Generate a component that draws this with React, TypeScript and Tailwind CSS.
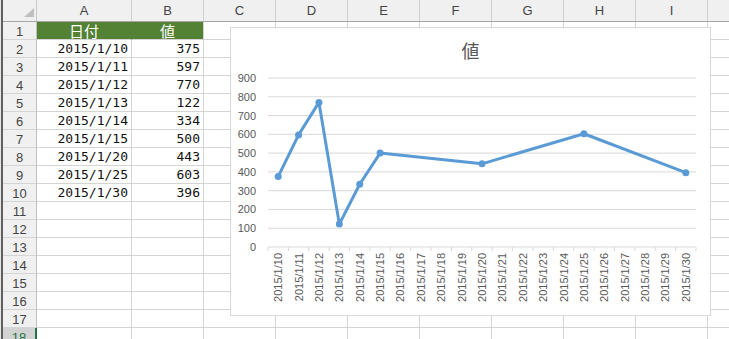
import React from 'react';

const cols = [
  { key: 'A', label: 'A', w: 'w-[95px]' },
  { key: 'B', label: 'B', w: 'w-[72px]' },
  { key: 'C', label: 'C', w: 'w-[72px]' },
  { key: 'D', label: 'D', w: 'w-[72px]' },
  { key: 'E', label: 'E', w: 'w-[72px]' },
  { key: 'F', label: 'F', w: 'w-[72px]' },
  { key: 'G', label: 'G', w: 'w-[72px]' },
  { key: 'H', label: 'H', w: 'w-[72px]' },
  { key: 'I', label: 'I', w: 'w-[72px]' },
  // J is scrolled mostly out of view; its letter isn't visible
  { key: 'J', label: '', w: 'w-[72px]' },
];

const data = [
  { date: '2015/1/10', day: 10, value: 375 },
  { date: '2015/1/11', day: 11, value: 597 },
  { date: '2015/1/12', day: 12, value: 770 },
  { date: '2015/1/13', day: 13, value: 122 },
  { date: '2015/1/14', day: 14, value: 334 },
  { date: '2015/1/15', day: 15, value: 500 },
  { date: '2015/1/20', day: 20, value: 443 },
  { date: '2015/1/25', day: 25, value: 603 },
  { date: '2015/1/30', day: 30, value: 396 },
];

const uiFont = "font-['Liberation_Sans',Arial,sans-serif]";
const cellFont = "font-['DejaVu_Sans_Mono',monospace]";
const cjkFont = "font-['Noto_Sans_CJK_JP',sans-serif]";

// chart plot geometry (svg coords)
const X0 = 37;
const X1 = 465;
const Y0 = 175;
const Y900 = 6;
const CATS = 21;
const catW = (X1 - X0) / CATS;
const px = (i: number) => X0 + (i + 0.5) * catW;
const py = (v: number) => Y0 - (v * (Y0 - Y900)) / 900;

function Chart() {
  const ticks = [900, 800, 700, 600, 500, 400, 300, 200, 100, 0];
  const points = data.map((d) => [px(d.day - 10), py(d.value)]);
  return (
    <div className="absolute left-[230px] top-[27px] flex h-[289px] w-[481px] flex-col border border-[#d9d9d9] bg-white">
      <div className={`flex h-[44px] items-center justify-center text-[18px] text-[#595959] ${cjkFont}`}>値</div>
      <svg width="479" height="243" className="block">
        {ticks.map((t) => (
          <g key={t}>
            <line x1={X0} x2={X1} y1={py(t)} y2={py(t)} stroke="#d9d9d9" strokeWidth="1" />
            <text
              x={25}
              y={py(t)}
              textAnchor="end"
              dominantBaseline="central"
              fontSize="11"
              fill="#595959"
              fontFamily="Liberation Sans, Arial, sans-serif"
            >
              {t}
            </text>
          </g>
        ))}
        {Array.from({ length: CATS + 1 }).map((_, i) => (
          <line key={i} x1={X0 + i * catW} x2={X0 + i * catW} y1={Y0} y2={Y0 + 4} stroke="#d9d9d9" strokeWidth="1" />
        ))}
        {Array.from({ length: CATS }).map((_, i) => (
          <text
            key={i}
            transform={`translate(${px(i)},181) rotate(-90)`}
            textAnchor="end"
            dominantBaseline="central"
            fontSize="11"
            fill="#595959"
            fontFamily="Liberation Sans, Arial, sans-serif"
          >
            {`2015/1/${10 + i}`}
          </text>
        ))}
        <polyline
          points={points.map((p) => p.join(',')).join(' ')}
          fill="none"
          stroke="#5b9bd5"
          strokeWidth="3"
          strokeLinejoin="round"
          strokeLinecap="round"
        />
        {points.map((p, i) => (
          <circle key={i} cx={p[0]} cy={p[1]} r="3.5" fill="#5b9bd5" />
        ))}
      </svg>
    </div>
  );
}

export default function App() {
  const rows = Array.from({ length: 18 }, (_, i) => i + 1);
  return (
    <div className="relative flex h-[339px] w-[729px] overflow-hidden bg-white">
      <div className="w-px shrink-0 bg-[#e6e6e6]" />
      <div className="w-[2px] shrink-0 bg-[#5f5f5f]" />
      <div className="flex min-w-0 flex-1 flex-col overflow-hidden">
        {/* column headers */}
        <div className={`flex h-[22px] shrink-0 border-b border-[#a6a6a6] bg-[#f0f0f0] text-[13px] text-[#444] ${uiFont}`}>
          <div className="relative w-[34px] shrink-0 border-r border-[#c8c8c8]">
            <div className="absolute left-[21px] top-[8px] h-0 w-0 border-b-[9px] border-l-[10px] border-b-[#c0c0c0] border-l-transparent" />
          </div>
          {cols.map((c) => (
            <div key={c.key} className={`${c.w} flex shrink-0 items-center justify-center border-r border-[#d0d0d0] pt-px`}>
              {c.label}
            </div>
          ))}
        </div>
        {rows.map((r) => {
          const d = r >= 2 && r <= 10 ? data[r - 2] : null;
          const selected = r === 18;
          return (
            <div key={r} className="flex h-[18px] shrink-0">
              <div
                className={`flex w-[34px] shrink-0 items-center justify-center border-b border-[#d4d4d4] pt-[2px] text-[13px] ${uiFont} ${
                  selected
                    ? 'border-r-2 border-r-[#217346] bg-[#d2d2d2] text-[#217346]'
                    : 'border-r border-r-[#bfbfbf] bg-[#f0f0f0] text-[#444]'
                }`}
              >
                {r}
              </div>
              {cols.map((c) => {
                if (r === 1 && (c.key === 'A' || c.key === 'B')) {
                  return (
                    <div
                      key={c.key}
                      className={`${c.w} flex shrink-0 items-center justify-center border-b border-b-[#d4d4d4] bg-[#548235] text-[15px] leading-none text-white ${cjkFont} ${
                        c.key === 'A' ? 'border-r border-r-[#548235]' : 'border-r border-r-[#d4d4d4]'
                      }`}
                    >
                      {c.key === 'A' ? '日付' : '値'}
                    </div>
                  );
                }
                let text = '';
                if (d && c.key === 'A') text = d.date;
                if (d && c.key === 'B') text = String(d.value);
                return (
                  <div
                    key={c.key}
                    className={`${c.w} flex shrink-0 items-center justify-end border-r border-b border-[#d4d4d4] pr-[3px] text-[13px] text-[#111] ${cellFont}`}
                  >
                    {text}
                  </div>
                );
              })}
            </div>
          );
        })}
      </div>
      <Chart />
    </div>
  );
}
